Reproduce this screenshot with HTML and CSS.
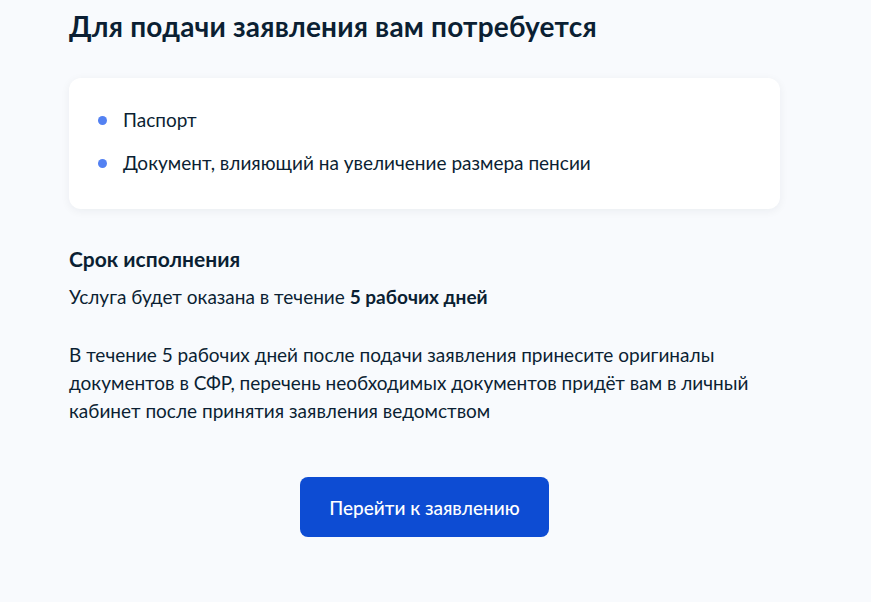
FILE: index.html
```html
<!DOCTYPE html>
<html lang="ru">
<head>
    <meta charset="UTF-8">
    <meta name="viewport" content="width=device-width, initial-scale=1.0">
    <title>Для подачи заявления вам потребуется</title>
    <link rel="stylesheet" href="styles.css">
</head>
<body>
    <div class="page">
        <h1 class="title">Для подачи заявления вам потребуется</h1>

        <div class="card">
            <ul class="docs">
                <li>Паспорт</li>
                <li>Документ, влияющий на увеличение размера пенсии</li>
            </ul>
        </div>

        <h2 class="subtitle">Срок исполнения</h2>
        <p class="text">Услуга будет оказана в течение <b>5 рабочих дней</b></p>
        <p class="text note">В течение 5 рабочих дней после подачи заявления принесите оригиналы документов в СФР, перечень необходимых документов придёт вам в личный кабинет после принятия заявления ведомством</p>

        <div class="actions">
            <button class="btn" type="button">Перейти к заявлению</button>
        </div>
    </div>
</body>
</html>
```

FILE: styles.css
```css
body {
    margin: 0;
    font-family: Lato, "Noto Sans", sans-serif;
    background-color: #f8fafd;
    color: #0b1f33;
}
.page {
    width: 711px;
    margin-left: 69px;
    padding-top: 8px;
}
.title {
    margin: 0;
    font-size: 28px;
    line-height: 36px;
    font-weight: 700;
    letter-spacing: 0.2px;
}
.card {
    margin-top: 34px;
    background-color: #fff;
    border-radius: 12px;
    box-shadow: 0 2px 10px rgba(11, 31, 51, 0.06);
    padding: 20px 32px 25px 29px;
}
.docs {
    list-style: none;
    margin: 0;
    padding: 0;
}
.docs li {
    position: relative;
    padding-left: 25px;
    font-size: 19px;
    line-height: 43px;
}
.docs li::before {
    content: "";
    position: absolute;
    left: 0;
    top: 18px;
    width: 9px;
    height: 9px;
    border-radius: 50%;
    background-color: #5381f2;
}
.subtitle {
    margin: 36px 0 0;
    font-size: 21px;
    line-height: 28px;
    font-weight: 700;
}
.text {
    margin: 10px 0 0;
    font-size: 19px;
    line-height: 28px;
}
.text b {
    font-weight: 700;
}
.note {
    margin-top: 30px;
}
.actions {
    display: flex;
    justify-content: center;
    margin-top: 52px;
}
.btn {
    width: 249px;
    height: 60px;
    border: none;
    border-radius: 8px;
    background-color: #0d4cd3;
    color: #fff;
    font-family: Lato, "Noto Sans", sans-serif;
    font-size: 19px;
    font-weight: 500;
}
```
